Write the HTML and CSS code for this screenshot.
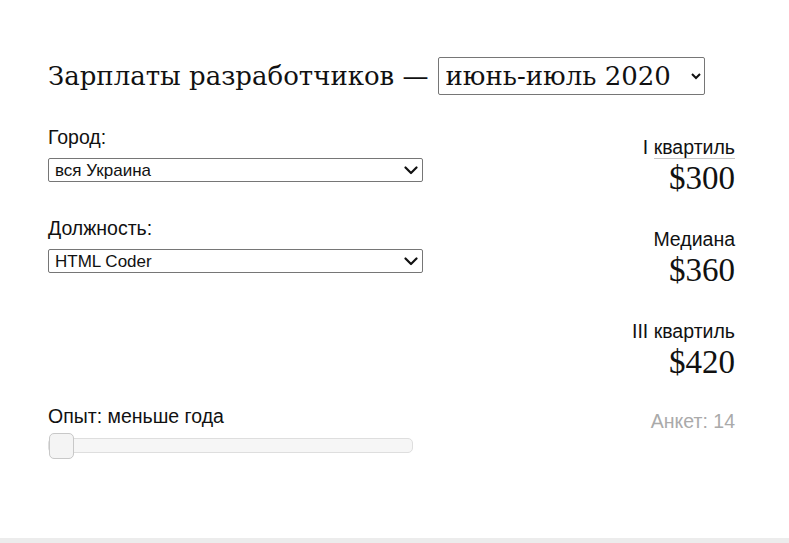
FILE: index.html
```html
<!DOCTYPE html>
<html lang="ru">
<head>
<meta charset="utf-8">
<title>Зарплаты разработчиков</title>
<link rel="stylesheet" href="styles.css">
</head>
<body>
<main class="page">
  <h1 class="title">Зарплаты разработчиков — <select class="period"><option>июнь-июль 2020</option></select></h1>
  <div class="content">
    <div class="filters">
      <div class="field">
        <label class="label">Город:</label>
        <div class="select-wrap">
          <select class="select"><option>вся Украина</option></select>
          <svg class="chevron" width="14" height="9" viewBox="0 0 14 9"><path d="M1.5 1.5 L7 7 L12.5 1.5" fill="none" stroke="#111" stroke-width="2.2" stroke-linecap="round" stroke-linejoin="round"/></svg>
        </div>
      </div>
      <div class="field">
        <label class="label">Должность:</label>
        <div class="select-wrap">
          <select class="select"><option>HTML Coder</option></select>
          <svg class="chevron" width="14" height="9" viewBox="0 0 14 9"><path d="M1.5 1.5 L7 7 L12.5 1.5" fill="none" stroke="#111" stroke-width="2.2" stroke-linecap="round" stroke-linejoin="round"/></svg>
        </div>
      </div>
      <div class="field field-exp">
        <label class="label">Опыт: меньше года</label>
        <input class="range" type="range" min="0" max="10" value="0">
      </div>
    </div>
    <div class="stats">
      <div class="stat">
        <div class="stat-label">I <span class="abbr">квартиль</span></div>
        <div class="stat-value">$300</div>
      </div>
      <div class="stat">
        <div class="stat-label">Медиана</div>
        <div class="stat-value">$360</div>
      </div>
      <div class="stat">
        <div class="stat-label">III квартиль</div>
        <div class="stat-value">$420</div>
      </div>
      <div class="count">Анкет: 14</div>
    </div>
  </div>
</main>
<div class="bottom-bar"></div>
</body>
</html>
```

FILE: styles.css
```css
html, body {
  margin: 0;
  padding: 0;
  background: #fff;
  height: 100%;
}
body {
  display: flex;
  flex-direction: column;
  font-family: "Liberation Sans", Arial, sans-serif;
  color: #111;
}
.page {
  flex: 1;
  padding: 57px 54px 0 48px;
}
.title {
  margin: 0;
  font-family: "DejaVu Serif", "Liberation Serif", serif;
  font-weight: normal;
  font-size: 26px;
  line-height: 38px;
  display: flex;
  align-items: center;
  gap: 9px;
}
.period {
  font-family: "DejaVu Serif", "Liberation Serif", serif;
  font-size: 26px;
  height: 38px;
  width: 267px;
  padding: 0 3px;
  color: #111;
  background: #fff;
  border: 1px solid #767676;
  border-radius: 2px;
}
.content {
  display: flex;
  justify-content: space-between;
  margin-top: 31px;
}
.filters {
  width: 375px;
  display: flex;
  flex-direction: column;
}
.field {
  display: flex;
  flex-direction: column;
}
.field + .field {
  margin-top: 35px;
}
.field-exp {
  margin-top: 132px !important;
}
.label {
  font-size: 19.5px;
  line-height: 22px;
  margin-bottom: 10px;
}
.select-wrap {
  position: relative;
  width: 375px;
  height: 24px;
}
.select {
  -webkit-appearance: none;
  appearance: none;
  display: block;
  font-family: "Liberation Sans", Arial, sans-serif;
  font-size: 17px;
  height: 24px;
  width: 375px;
  color: #111;
  background: #fff;
  border: 1px solid #767676;
  border-radius: 2px;
  padding: 0 24px 0 6px;
  margin: 0;
}
.chevron {
  position: absolute;
  right: 5px;
  top: 8px;
  pointer-events: none;
}
.range {
  -webkit-appearance: none;
  appearance: none;
  width: 365px;
  height: 26px;
  margin: -5px 0 0 0;
  padding: 0;
  background: transparent;
}
.range::-webkit-slider-runnable-track {
  height: 15px;
  background: #f6f6f6;
  border: 1px solid #dedede;
  border-radius: 5px;
  box-sizing: border-box;
}
.range::-webkit-slider-thumb {
  -webkit-appearance: none;
  appearance: none;
  width: 25px;
  height: 26px;
  margin-top: -6px;
  background: #f4f4f4;
  border: 1px solid #c8c8c8;
  border-radius: 5px;
  box-sizing: border-box;
}
.stats {
  text-align: right;
  display: flex;
  flex-direction: column;
  align-items: flex-end;
  padding-top: 10px;
}
.stat {
  margin-bottom: 31px;
}
.stat-label {
  font-size: 19.5px;
  line-height: 23px;
}
.abbr {
  border-bottom: 1px solid #c6c6c6;
}
.stat-value {
  font-family: "Liberation Serif", "Times New Roman", serif;
  font-size: 33px;
  line-height: 38px;
}
.count {
  font-size: 19.5px;
  line-height: 23px;
  color: #aaa;
  margin-top: -2px;
}
.bottom-bar {
  height: 5px;
  background: #ececec;
}
```
